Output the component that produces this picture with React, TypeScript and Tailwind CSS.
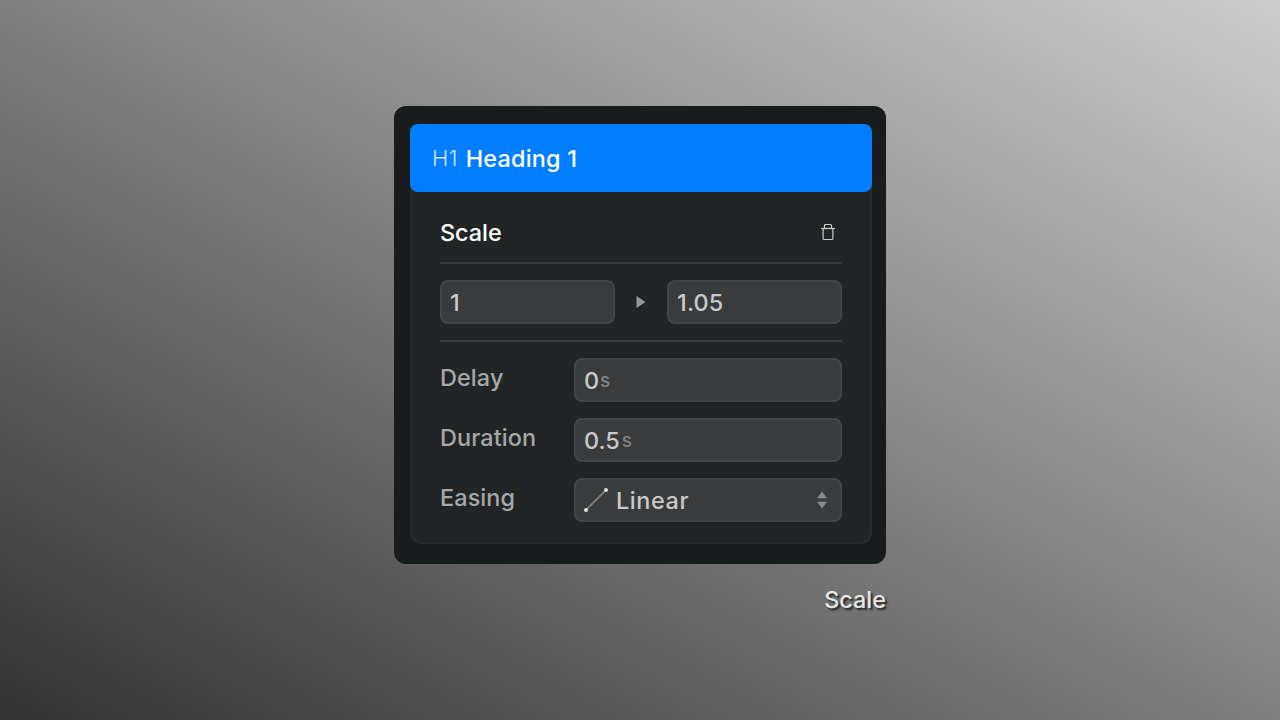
import type { ReactNode } from "react";

function TrashIcon() {
  return (
    <svg width="16" height="18" viewBox="0 0 16 18" fill="none" stroke="#cbcccc" strokeWidth="1.2">
      <path d="M1 5.5h14" />
      <path d="M4.5 5V2.6q0-1.1 1.1-1.1h4.8q1.1 0 1.1 1.1V5" />
      <path d="M3.1 5.5v9.9q0 1.1 1.1 1.1h7.6q1.1 0 1.1-1.1V5.5" />
    </svg>
  );
}

function LinearIcon() {
  return (
    <svg width="26" height="26" viewBox="0 0 26 26">
      <path d="M3 23L23 3" stroke="#7d7e7d" strokeWidth="1.8" />
      <circle cx="3" cy="23" r="2" fill="#dedfdf" />
      <circle cx="23" cy="3" r="2" fill="#dedfdf" />
    </svg>
  );
}

function StepperIcon() {
  return (
    <svg width="10" height="18" viewBox="0 0 10 18" fill="#8b8c8d">
      <path d="M5 .5L9.9 7.2H.1z" />
      <path d="M5 17.5L9.9 10.8H.1z" />
    </svg>
  );
}

function Field({ children, className }: { children: ReactNode; className: string }) {
  return (
    <div
      className={`flex h-11 items-center rounded-lg border-2 border-[#434546] bg-[#3a3b3c] pl-2 font-[450] text-[#c8c9c9] ${className}`}
    >
      {children}
    </div>
  );
}

function Row({ label, children }: { label: string; children: ReactNode }) {
  return (
    <div className="flex justify-between">
      <span className="h-10 leading-10 font-[450] tracking-[0.12px] text-[#a5a7a8]">{label}</span>
      <Field className="w-[268px]">{children}</Field>
    </div>
  );
}

export default function App() {
  return (
    <div className="flex h-screen w-full flex-col items-center overflow-hidden bg-[linear-gradient(to_top_right,#333333,#cccccc)] pt-[106px] font-['Inter',sans-serif] text-[23.4px] whitespace-nowrap">
      <div className="h-[458px] w-[492px] rounded-xl bg-[#181c1c] pt-[18px] pr-[14px] pb-5 pl-4">
        <div className="flex h-full flex-col rounded-xl bg-[#212525]">
          {/* Selected layer */}
          <div className="relative z-10 flex h-[68px] shrink-0 items-center gap-2 rounded-lg bg-[#007eff] pl-[22px] pt-px">
            <span className="text-[22px] font-[350] tracking-[0.4px] text-[#cfe5ff]">H1</span>
            <span className="font-medium tracking-[0.2px] text-white">Heading 1</span>
          </div>

          {/* Effect settings */}
          <div className="-mt-2 flex-1 rounded-b-xl border-2 border-t-0 border-[#292c2d] px-7 pt-2">
            <div className="flex h-[72px] items-center justify-between border-b-2 border-[#38393b] pt-[11px] pr-1.5">
              <span className="font-medium text-white">Scale</span>
              <span className="pb-0.5">
                <TrashIcon />
              </span>
            </div>

            <div className="flex h-[78px] items-center justify-between border-b-2 border-[#38393b]">
              <Field className="w-[175px] pt-px">1</Field>
              <svg className="mr-px" width="10" height="12" viewBox="0 0 10 12" fill="#969798">
                <path d="M.5 0L9.5 6L.5 12z" />
              </svg>
              <Field className="w-[175px] pt-px">
                <span className="tracking-[0.2px]">1.05</span>
              </Field>
            </div>

            <div className="flex flex-col gap-4 pt-4">
              <Row label="Delay">
                <span className="pt-px">0</span>
                <span className="ml-px pt-0.5 text-[19px] font-medium text-[#7e7f80]">s</span>
              </Row>
              <Row label="Duration">
                <span className="pt-px">0.5</span>
                <span className="ml-0.5 pt-0.5 text-[19px] font-medium text-[#7e7f80]">s</span>
              </Row>
              <Row label="Easing">
                <span className="-ml-px">
                  <LinearIcon />
                </span>
                <span className="ml-[7px] flex-1 pt-px tracking-[0.6px]">Linear</span>
                <span className="mr-[13px]">
                  <StepperIcon />
                </span>
              </Row>
            </div>
          </div>
        </div>
      </div>

      <div className="mt-[18px] w-[492px] text-right font-medium text-[#e6e6e6] [text-shadow:2px_2px_2px_rgba(0,0,0,0.7)]">
        Scale
      </div>
    </div>
  );
}
